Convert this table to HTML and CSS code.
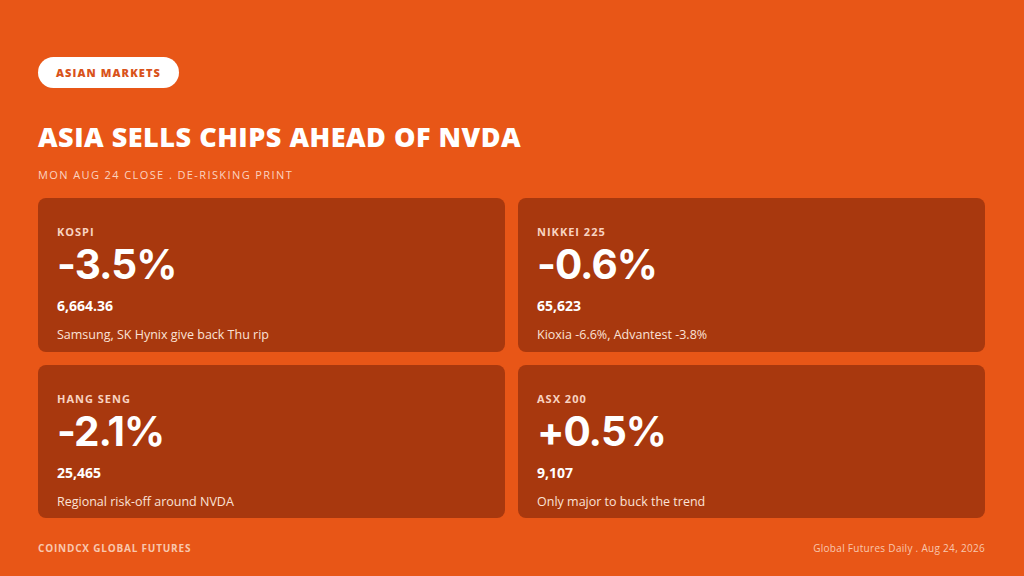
FILE: index.html
```html
<!DOCTYPE html>
<html>
<head>
<meta charset="utf-8">
<link rel="stylesheet" href="styles.css">
</head>
<body>
<div class="slide">
  <div class="tag">ASIAN MARKETS</div>
  <h1 class="title">ASIA SELLS CHIPS AHEAD OF NVDA</h1>
  <div class="subtitle">MON AUG 24 CLOSE . DE-RISKING PRINT</div>
  <div class="grid">
    <div class="card">
      <div class="label">KOSPI</div>
      <div class="value">-3.5%</div>
      <div class="level">6,664.36</div>
      <div class="note">Samsung, SK Hynix give back Thu rip</div>
    </div>
    <div class="card">
      <div class="label">NIKKEI 225</div>
      <div class="value">-0.6%</div>
      <div class="level">65,623</div>
      <div class="note">Kioxia -6.6%, Advantest -3.8%</div>
    </div>
    <div class="card">
      <div class="label">HANG SENG</div>
      <div class="value">-2.1%</div>
      <div class="level">25,465</div>
      <div class="note">Regional risk-off around NVDA</div>
    </div>
    <div class="card">
      <div class="label">ASX 200</div>
      <div class="value">+0.5%</div>
      <div class="level">9,107</div>
      <div class="note">Only major to buck the trend</div>
    </div>
  </div>
  <div class="footer">
    <div class="brand">COINDCX GLOBAL FUTURES</div>
    <div class="date">Global Futures Daily . Aug 24, 2026</div>
  </div>
</div>
</body>
</html>
```
FILE: styles.css
```css
html, body {
  margin: 0;
  padding: 0;
}
body {
  width: 1024px;
  height: 576px;
  background: #e85617;
  font-family: "Open Sans", "DejaVu Sans", sans-serif;
  color: #ffffff;
  overflow: hidden;
}
.slide {
  box-sizing: border-box;
  width: 1024px;
  height: 576px;
  padding: 57px 39px 0 38px;
  display: flex;
  flex-direction: column;
}
.tag {
  align-self: flex-start;
  background: #ffffff;
  color: #d9531b;
  font-weight: 800;
  font-size: 11px;
  letter-spacing: 1.1px;
  height: 31px;
  line-height: 31px;
  padding: 0 18px;
  border-radius: 16px;
}
.title {
  margin: 31px 0 0 0;
  font-size: 27px;
  font-weight: 800;
  line-height: 36px;
  letter-spacing: 0.5px;
}
.subtitle {
  margin-top: 13px;
  font-size: 11px;
  letter-spacing: 1.4px;
  color: #fbd3c0;
  line-height: 14px;
}
.grid {
  margin-top: 16px;
  display: grid;
  grid-template-columns: 1fr 1fr;
  grid-template-rows: 154px 153px;
  gap: 13px;
}
.card {
  background: #a8380e;
  border-radius: 8px;
  padding: 27px 19px 0 19px;
  display: flex;
  flex-direction: column;
}
.label {
  font-size: 11px;
  font-weight: 700;
  letter-spacing: 1px;
  color: #f8d3c1;
  line-height: 14px;
}
.value {
  margin-top: 3px;
  font-family: "Inter", "Open Sans", sans-serif;
  font-size: 40.5px;
  font-weight: 700;
  line-height: 46px;
  letter-spacing: -1px;
}
.level {
  margin-top: 9px;
  font-size: 14px;
  font-weight: 700;
  line-height: 18px;
}
.note {
  margin-top: 12px;
  font-size: 12.5px;
  color: #fbe2d6;
  line-height: 16px;
}
.footer {
  margin-top: 23px;
  display: flex;
  justify-content: space-between;
  align-items: center;
}
.brand {
  font-size: 10px;
  font-weight: 700;
  letter-spacing: 0.8px;
  color: #f8c7ae;
}
.date {
  font-size: 10px;
  letter-spacing: 0.3px;
  color: #f8c7ae;
}
```
